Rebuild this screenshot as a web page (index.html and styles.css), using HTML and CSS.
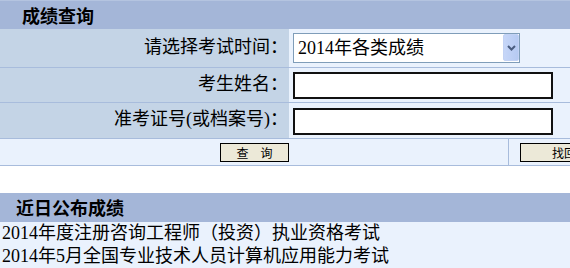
FILE: index.html
```html
<!DOCTYPE html>
<html lang="zh-CN">
<head>
<meta charset="utf-8">
<title>成绩查询</title>
<link rel="stylesheet" href="styles.css">
</head>
<body>
<section class="query">
  <h2 class="panel-head panel-head-query">成绩查询</h2>
  <div class="form-row row-time">
    <div class="label">请选择考试时间：</div>
    <div class="value">
      <div class="select-wrap">
        <select class="select">
          <option>2014年各类成绩</option>
        </select>
        <span class="select-arrow">
          <svg width="9" height="6" viewBox="0 0 9 6"><path d="M1 1 L4.5 4.5 L8 1" fill="none" stroke="#4a5d80" stroke-width="2"/></svg>
        </span>
      </div>
    </div>
  </div>
  <div class="form-row row-name">
    <div class="label">考生姓名：</div>
    <div class="value"><input class="text-input" type="text"></div>
  </div>
  <div class="form-row row-id">
    <div class="label">准考证号(或档案号)：</div>
    <div class="value"><input class="text-input" type="text"></div>
  </div>
  <div class="button-row">
    <div class="button-cell button-cell-main"><button class="btn btn-query">查　询</button></div>
    <div class="button-cell button-cell-side"><button class="btn btn-find">找回准考证号</button></div>
  </div>
</section>
<section class="recent">
  <h2 class="panel-head panel-head-recent">近日公布成绩</h2>
  <ul class="recent-list">
    <li>2014年度注册咨询工程师（投资）执业资格考试</li>
    <li>2014年5月全国专业技术人员计算机应用能力考试</li>
  </ul>
</section>
</body>
</html>
```
FILE: styles.css
```css
html, body {
  margin: 0;
  padding: 0;
  overflow: hidden;
  background: #ffffff;
}
body {
  font-family: "Liberation Serif", "Noto Sans CJK SC", serif;
  font-size: 18px;
  color: #000;
  width: 570px;
}
.panel-head {
  margin: 0;
  height: 29px;
  box-sizing: border-box;
  background: #a4b6d8;
  font-family: "Noto Sans CJK SC", sans-serif;
  font-weight: bold;
  font-size: 18px;
  line-height: 28px;
  color: #000;
}
.panel-head-query {
  padding-left: 22px;
  border-top: 1px solid #b4c4e0;
}
.panel-head-recent {
  padding-left: 16px;
}
.form-row {
  display: grid;
  grid-template-columns: 289px 1fr;
  border-bottom: 1px solid #a8bcdc;
}
.row-time { height: 38px; }
.row-name { height: 34px; }
.row-id { height: 35px; }
.label {
  background: #c4d4e6;
  text-align: right;
  padding-right: 1px;
  display: flex;
  align-items: center;
  justify-content: flex-end;
  line-height: 20px;
  padding-bottom: 3px;
}
.value {
  background: #eaf2fd;
  padding-left: 4px;
  display: flex;
  align-items: center;
}
.select-wrap {
  position: relative;
  width: 227px;
  height: 30px;
}
.select {
  appearance: none;
  -webkit-appearance: none;
  width: 227px;
  height: 30px;
  box-sizing: border-box;
  border: 1px solid #7f9db9;
  background: #fff;
  font-family: "Liberation Serif", "Noto Sans CJK SC", serif;
  font-size: 18px;
  color: #000;
  padding: 0 0 0 4px;
  margin: 0;
  border-radius: 0;
  outline: none;
}
.select-arrow {
  position: absolute;
  right: 1px;
  top: 1px;
  width: 16px;
  height: 27px;
  box-sizing: border-box;
  border: 1px solid #c2d2f4;
  border-radius: 2px;
  background: linear-gradient(to right, #c6d6f8, #b6caf2);
  display: flex;
  align-items: center;
  justify-content: center;
}
.text-input {
  width: 260px;
  height: 27px;
  box-sizing: border-box;
  border: 2px solid #111;
  background: #fff;
  margin: 0;
  padding: 0 2px;
  font-size: 16px;
  outline: none;
}
.row-id .value { padding-top: 1px; }
.button-row {
  display: grid;
  grid-template-columns: 508px 1fr;
  height: 26px;
  border-bottom: 1px solid #a8bcdc;
  background: #eaf2fd;
}
.button-cell {
  display: flex;
  align-items: center;
  overflow: visible;
}
.button-cell-main {
  justify-content: center;
}
.button-cell-side {
  border-left: 1px solid #a8bcdc;
  padding-left: 11px;
}
.btn {
  height: 19px;
  box-sizing: border-box;
  border: 1px solid #000;
  background: #ece9d8;
  font-family: "Noto Sans CJK SC", sans-serif;
  font-size: 12px;
  line-height: 15px;
  padding: 0;
  margin: 0;
  color: #000;
  border-radius: 0;
  flex-shrink: 0;
}
.btn-query { width: 69px; margin-left: 1px; }
.btn-find { width: 136px; }
.recent {
  margin-top: 27px;
}
.recent-list {
  list-style: none;
  margin: 0;
  padding: 0 0 0 2px;
  background: #eaf2fd;
  line-height: 23px;
  font-size: 18px;
  white-space: nowrap;
}
.recent-list li {
  margin: 0;
  padding: 0;
}
```
